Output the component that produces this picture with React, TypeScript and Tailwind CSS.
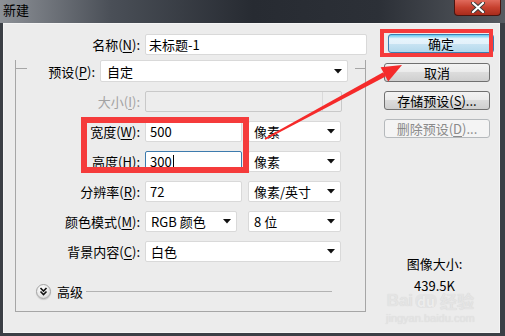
import React from 'react'

const font = "font-['Noto_Sans_CJK_SC','Noto_Sans',sans-serif]"

function Caret() {
  return (
    <svg width="8" height="5" viewBox="0 0 8 5" className="shrink-0">
      <polygon points="0,0 8,0 4,4.5" fill="#111" />
    </svg>
  )
}

function Key({ k }: { k: string }) {
  return (
    <span>
      (<span className="underline underline-offset-[2px]">{k}</span>):
    </span>
  )
}

function Select({ w, text, pl = 'pl-[5px]' }: { w: string; text: string; pl?: string }) {
  return (
    <div className={`flex h-[21px] items-center justify-between rounded-[2px] border border-[#d9d9d9] bg-white pr-[5px] ${pl} ${w}`}>
      <span className="leading-none">{text}</span>
      <Caret />
    </div>
  )
}

function Field({ w, text, focused = false }: { w: string; text: string; focused?: boolean }) {
  return (
    <div
      className={`flex h-[21px] items-center rounded-[2px] border bg-white pl-[4px] ${w} ${
        focused ? 'border-[#3d7bad]' : 'border-[#d9d9d9]'
      }`}
    >
      <span className="leading-none">{text}</span>
      {focused && <span className="ml-[1px] h-[14px] w-px bg-black" />}
    </div>
  )
}

function Row({ label, k, disabled = false, children }: { label: string; k: string; disabled?: boolean; children: React.ReactNode }) {
  return (
    <div className="flex h-[21px] items-center">
      <div className={`w-[124px] text-right leading-none ${disabled ? 'text-[#a3a3a3]' : ''}`}>
        {label}
        <Key k={k} />
      </div>
      <div className="ml-[5px] flex items-center">{children}</div>
    </div>
  )
}

const btn =
  'flex h-[19px] w-[106px] items-center justify-center rounded-[3px] border leading-none'
const btnNormal =
  'border-[#707070] bg-[linear-gradient(#f3f3f3,#ebebeb_45%,#dcdcdc_50%,#cfcfcf)]'

export default function App() {
  return (
    <div className={`relative h-[336px] w-[505px] overflow-hidden bg-[#3b3f45] text-[13px] text-black ${font}`}>
      {/* title bar */}
      <div className="flex h-[23px] items-start justify-between bg-[linear-gradient(90deg,#8d9197_0%,#4a4f57_22%,#272b32_50%,#2c3037_75%,#575b61_100%)]">
        <span className="pl-[3px] pt-[1px] text-[13px] leading-[18px] text-black">新建</span>
        <div className="mr-[4px] flex h-[16px] w-[47px] items-center justify-center rounded-b-[4px] border border-t-0 border-[#4a1510] bg-[linear-gradient(#e06a5c,#c7412f_50%,#a82c1c)]">
          <svg width="14" height="11" viewBox="0 0 14 11">
            <path d="M2 1 L12 10 M12 1 L2 10" stroke="#3a3a3a" strokeWidth="4" strokeLinecap="round" />
            <path d="M2 1 L12 10 M12 1 L2 10" stroke="#fff" strokeWidth="2.2" strokeLinecap="round" />
          </svg>
        </div>
      </div>

      {/* body */}
      <div className="ml-[3px] flex h-[310px] w-[497px] border border-[#f4f4f4] bg-[#ececec]">
        {/* left form */}
        <div className="w-[366px] pt-[10px]">
          <div className="flex h-[21px] items-center">
            <div className="w-[136px] text-right leading-none">
              名称<Key k="N" />
            </div>
            <div className="ml-[5px] flex h-[21px] w-[222px] items-center rounded-[2px] border border-[#d9d9d9] bg-white pl-[3px] leading-none">
              未标题-1
            </div>
          </div>

          <div className="ml-[11px] mt-[13px] h-[252px] w-[351px] border-x border-b border-[#a6a6a6]">
            <div className="-mt-[8px] flex h-[22px] items-center">
              <div className="mt-[8px] w-[11px] self-start border-t border-[#a6a6a6]" />
              <div className="w-[68px] text-right leading-none">
                预设<Key k="P" />
              </div>
              <div className="ml-[5px]">
                <div className="flex h-[22px] w-[248px] items-center justify-between rounded-[2px] border border-[#d9d9d9] bg-white pl-[6px] pr-[5px]">
                  <span className="leading-none">自定</span>
                  <Caret />
                </div>
              </div>
              <div className="ml-[7px] mt-[8px] flex-1 self-start border-t border-[#a6a6a6]" />
            </div>

            <div className="mt-[9px] flex flex-col gap-[9px]">
              <Row label="大小" k="I" disabled>
                <div className="flex h-[21px] w-[197px] rounded-[2px] border border-[#c9c9c9] bg-[#ededed]">
                  <div className="flex-1 border-r border-[#dadada]" />
                  <div className="w-[18px]" />
                </div>
              </Row>
              <Row label="宽度" k="W">
                <Field w="w-[97px]" text="500" />
                <div className="ml-[6px]">
                  <Select w="w-[93px]" text="像素" />
                </div>
              </Row>
              <Row label="高度" k="H">
                <Field w="w-[97px]" text="300" focused />
                <div className="ml-[6px]">
                  <Select w="w-[93px]" text="像素" />
                </div>
              </Row>
              <Row label="分辨率" k="R">
                <Field w="w-[97px]" text="72" />
                <div className="ml-[6px]">
                  <Select w="w-[93px]" text="像素/英寸" />
                </div>
              </Row>
              <Row label="颜色模式" k="M">
                <Select w="w-[92px]" text="RGB 颜色" />
                <div className="ml-[11px]">
                  <Select w="w-[93px]" text="8 位" />
                </div>
              </Row>
              <Row label="背景内容" k="C">
                <Select w="w-[196px]" text="白色" />
              </Row>
            </div>

            <div className="mt-[22px] flex items-center">
              <div className="ml-[20px] flex h-[15px] w-[15px] items-center justify-center rounded-full border border-[#a4a4a4] bg-[radial-gradient(circle_at_40%_30%,#ffffff,#e6e6e6_60%,#c9c9c9)] shadow-[0_1px_1px_rgba(0,0,0,0.15)]">
                <svg width="9" height="9" viewBox="0 0 9 9">
                  <path d="M1.5 1 L4.5 4 L7.5 1 M1.5 4.5 L4.5 7.5 L7.5 4.5" fill="none" stroke="#111" strokeWidth="1.6" />
                </svg>
              </div>
              <span className="ml-[6px] leading-none">高级</span>
              <div className="ml-[3px] mr-[33px] flex-1 border-t border-[#b3b3b3]" />
            </div>
          </div>
        </div>

        {/* right column */}
        <div className="flex flex-1 flex-col items-start pt-[10px]">
          <div className={`${btn} ml-[18px] w-[103px] border-[#3c7fb1] bg-[linear-gradient(#63c9ef,#e6f5fc_22%,#e3f1fa_50%,#c7e3f2_55%,#b3d8ec)]`}>
            确定
          </div>
          <div className={`${btn} ${btnNormal} ml-[14px] mt-[10px]`}>取消</div>
          <div className={`${btn} ${btnNormal} ml-[14px] mt-[9px]`}>
            存储预设(<span className="underline underline-offset-[2px]">S</span>)...
          </div>
          <div className={`${btn} ml-[14px] mt-[9px] border-[#b5b9bc] bg-[#f4f4f4] text-[#8a8a8a]`}>
            删除预设(<span className="underline underline-offset-[2px]">D</span>)...
          </div>
          <div className="mt-[117px] w-full text-center leading-[18px]">图像大小:</div>
          <div className="mt-[4px] w-full text-center leading-[18px]">439.5K</div>
        </div>
      </div>

      {/* baidu watermark */}
      <div className="pointer-events-none absolute left-[386px] top-[292px] flex flex-col items-center text-[#e4e4e4] [text-shadow:0_0_1px_#d2d2d2]">
        <div className="flex items-center text-[17px] font-bold leading-none">
          <span className="font-['Liberation_Sans',sans-serif]">Bai</span>
          <span className="ml-[2px] rounded-[6px] bg-[#e4e4e4] px-[2px] text-[14px] text-[#ededed]">du</span>
          <span className="ml-[3px]">经验</span>
        </div>
        <div className="mt-[4px] font-['Liberation_Sans',sans-serif] text-[11px] leading-none">jingyan.baidu.com</div>
      </div>

      {/* red annotations */}
      <div className="pointer-events-none absolute left-[380px] top-[29px] h-[28px] w-[113px] border-[4px] border-[#f53b3b]" />
      <div className="pointer-events-none absolute left-[81px] top-[117px] h-[56px] w-[168px] border-[6px] border-[#f53b3b]" />
      <svg className="pointer-events-none absolute left-0 top-0" width="505" height="336" viewBox="0 0 505 336">
        <polygon points="265.4,139.7 264.6,138.3 383.2,72.2 385.6,76.6" fill="#f52a2a" />
        <polygon points="402,65 388.2,81.5 380.6,67.3" fill="#f52a2a" />
      </svg>
    </div>
  )
}
